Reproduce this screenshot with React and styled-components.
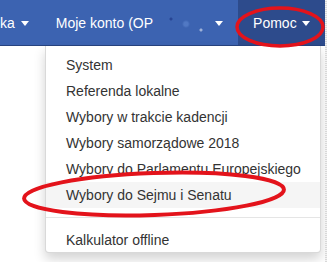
import React from 'react'
import styled, { createGlobalStyle } from 'styled-components'

const Global = createGlobalStyle`
  html, body { margin: 0; padding: 0; background: #fff; }
  body { font-family: "Liberation Sans", Arial, sans-serif; }
`

const Page = styled.div`
  position: relative;
  width: 327px;
  height: 262px;
  overflow: hidden;
  display: flex;
`

const Main = styled.div`
  width: 325px;
  display: flex;
  flex-direction: column;
`

const Edge = styled.div`
  width: 2px;
  background: repeating-linear-gradient(0deg, #d8d8d8 0 1px, #f2f2f2 1px 2px);
`

const Navbar = styled.nav`
  display: flex;
  height: 45px;
  background: #3c63b1;
  border-bottom: 1px solid #27437f;
`

const NavItem = styled.a`
  display: flex;
  align-items: center;
  padding: 0 ${p => p.$right ?? 15}px 0 ${p => p.$left ?? 15}px;
  font-size: 14px;
  color: #fff;
  background: ${p => (p.$active ? '#2d4b8c' : 'transparent')};
  white-space: nowrap;
  cursor: pointer;
`

const Caret = styled.span`
  display: inline-block;
  width: 0;
  height: 0;
  margin-left: ${p => p.$gap ?? 3}px;
  margin-top: 1px;
  border-top: 5px solid #fff;
  border-left: 4.5px solid transparent;
  border-right: 4.5px solid transparent;
`

const Redacted = styled.span`
  display: inline-block;
  width: 60px;
  height: 20px;
  background: radial-gradient(circle at 30% 30%, rgba(20,40,120,.5) 0 1px, transparent 2px),
    radial-gradient(circle at 55% 55%, rgba(120,160,230,.35) 0 2px, transparent 4px),
    radial-gradient(circle at 80% 85%, rgba(255,255,255,.5) 0 1px, transparent 2px);
`

const Body = styled.div`
  flex: 1;
  display: flex;
  padding-left: 45px;
`

const Dropdown = styled.ul`
  list-style: none;
  margin: 0;
  padding: 6px 0 5px;
  width: 276px;
  height: 207px;
  box-sizing: border-box;
  background: #fff;
  border: 1px solid rgba(0, 0, 0, 0.15);
  border-top: 0;
  border-radius: 0 0 4px 4px;
  box-shadow: 0 6px 12px rgba(0, 0, 0, 0.175);
`

const Item = styled.li`
  padding: 3px 20px;
  font-size: 14px;
  line-height: 20px;
  color: #333;
  white-space: nowrap;
  background: ${p => (p.$hover ? '#f5f5f5' : 'transparent')};
`

const Divider = styled.li`
  height: 1px;
  margin: 9px 0;
  background: #e5e5e5;
`

const Marks = styled.svg`
  position: absolute;
  inset: 0;
  pointer-events: none;
`

export default function App() {
  return (
    <Page>
      <Global />
      <Main>
        <Navbar>
          <NavItem $left={0} $right={12}>ka<Caret $gap={6} /></NavItem>
          <NavItem>Moje konto (OP<Redacted /><Caret $gap={2} /></NavItem>
          <NavItem $active>Pomoc<Caret $gap={5} /></NavItem>
        </Navbar>
        <Body>
          <Dropdown>
            <Item>System</Item>
            <Item>Referenda lokalne</Item>
            <Item>Wybory w trakcie kadencji</Item>
            <Item>Wybory samorządowe 2018</Item>
            <Item>Wybory do Parlamentu Europejskiego</Item>
            <Item $hover>Wybory do Sejmu i Senatu</Item>
            <Divider />
            <Item>Kalkulator offline</Item>
          </Dropdown>
        </Body>
      </Main>
      <Edge />
      <Marks width="327" height="262" viewBox="0 0 327 262">
        <ellipse cx="280" cy="27" rx="43" ry="19" fill="none" stroke="#e3131b" strokeWidth="3.5" />
        <ellipse cx="154" cy="194" rx="130" ry="21" fill="none" stroke="#e3131b" strokeWidth="4" transform="rotate(-2 154 194)" />
      </Marks>
    </Page>
  )
}
